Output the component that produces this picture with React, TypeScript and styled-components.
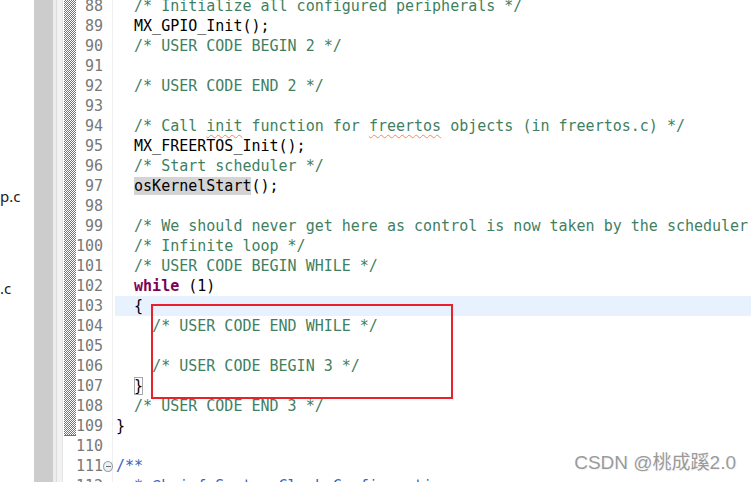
import React from "react";
import styled, { createGlobalStyle, css } from "styled-components";

const Global = createGlobalStyle`
  html, body { margin: 0; padding: 0; background: #fff; }
  body { width: 751px; height: 482px; overflow: hidden; }
`;

const Page = styled.div`
  display: flex;
  width: 751px;
  height: 482px;
  overflow: hidden;
  position: relative;
  background: #fff;
`;

const Explorer = styled.div`
  width: 34px;
  flex: none;
  display: flex;
  flex-direction: column;
  overflow: hidden;
  background: #fff;
`;

const TreeRow = styled.div`
  height: 23px;
  flex: none;
  display: flex;
  align-items: center;
  font-family: "Noto Sans", "Open Sans", sans-serif;
  font-size: 15px;
  color: #1a1a1a;
  white-space: nowrap;
`;

const Sash = styled.div`
  width: 19px;
  flex: none;
  background: #cccccc;
`;

const EditorEdge = styled.div`
  width: 11px;
  flex: none;
  background: linear-gradient(
    to right,
    #ececec 0 3px,
    #dcdcdc 3px 4px,
    #f2f2f2 4px 9px,
    #e4e4e4 9px 10px,
    #ffffff 10px 11px
  );
`;

const Editor = styled.div`
  flex: 1;
  position: relative;
  overflow: hidden;
`;

const Lines = styled.div`
  display: flex;
  flex-direction: column;
  margin-top: -4px;
`;

const Line = styled.div`
  display: grid;
  grid-template-columns: 12px 27px 12px 1fr;
  height: 20px;
  font-family: "DejaVu Sans Mono", "Liberation Mono", monospace;
  font-size: 15px;
  line-height: 20px;
`;

const Quick = styled.div<{ $changed: boolean; $last: boolean }>`
  ${(p) =>
    p.$changed &&
    css`
      background: repeating-conic-gradient(#2f86e0 0 25%, #ffffff 0 50%) 0 0 / 2px 2px;
    `}
  ${(p) =>
    p.$last &&
    css`
      box-shadow: inset 0 -1px 0 #2a7fdc;
    `}
`;

const Num = styled.div`
  text-align: right;
  color: #787878;
  white-space: nowrap;
`;

const Fold = styled.div`
  display: flex;
  align-items: center;
  justify-content: center;
  background: linear-gradient(to right, transparent 0 9px, #f0f0f0 9px 10px, transparent 10px);
`;

const FoldIcon = styled.span`
  width: 9px;
  height: 9px;
  border: 1px solid #9aa0a8;
  border-radius: 50%;
  background: #eef0f3;
  display: flex;
  align-items: center;
  justify-content: center;
  margin-right: 2px;
  &::after {
    content: "";
    width: 5px;
    height: 1px;
    background: #6b7280;
  }
`;

const Code = styled.div<{ $current?: boolean }>`
  padding-left: 1px;
  white-space: pre;
  color: #000;
  background: ${(p) => (p.$current ? "#e8f2fe" : "transparent")};
`;

const Comment = styled.span`
  color: #3f7f5f;
`;

const Doc = styled.span`
  color: #3f5fbf;
`;

const Keyword = styled.span`
  color: #7f0055;
  font-weight: bold;
`;

const Misspelled = styled.span`
  text-decoration: underline wavy #f08a5d;
  text-decoration-thickness: 1px;
  text-underline-offset: 3px;
`;

const Occurrence = styled.span`
  background: #d4d4d4;
`;

const Bracket = styled.span`
  outline: 1px solid #a8a8a8;
  outline-offset: -1px;
`;

const Highlight = styled.div`
  position: absolute;
  left: 87px;
  top: 304px;
  width: 298px;
  height: 91px;
  border: 2px solid #e8212a;
  pointer-events: none;
`;

const Watermark = styled.div`
  position: absolute;
  right: 15px;
  bottom: 8px;
  font-family: "Liberation Sans", "Noto Sans CJK SC", sans-serif;
  font-size: 19px;
  color: #9a9a9a;
  text-shadow: 0 0 1px #ffffff, 1px 1px 0 #f2f2f2;
  white-space: nowrap;
`;

type LineDef = { n: number; code: React.ReactNode; current?: boolean; fold?: boolean };

const lines: LineDef[] = [
  { n: 88, code: <>  <Comment>/* Initialize all configured peripherals */</Comment></> },
  { n: 89, code: <>  MX_GPIO_Init();</> },
  { n: 90, code: <>  <Comment>/* USER CODE BEGIN 2 */</Comment></> },
  { n: 91, code: "" },
  { n: 92, code: <>  <Comment>/* USER CODE END 2 */</Comment></> },
  { n: 93, code: "" },
  {
    n: 94,
    code: (
      <>
        {"  "}
        <Comment>
          /* Call <Misspelled>init</Misspelled> function for <Misspelled>freertos</Misspelled> objects (in freertos.c) */
        </Comment>
      </>
    ),
  },
  { n: 95, code: <>  MX_FREERTOS_Init();</> },
  { n: 96, code: <>  <Comment>/* Start scheduler */</Comment></> },
  { n: 97, code: <>  <Occurrence>osKernelStart</Occurrence>();</> },
  { n: 98, code: "" },
  { n: 99, code: <>  <Comment>/* We should never get here as control is now taken by the scheduler */</Comment></> },
  { n: 100, code: <>  <Comment>/* Infinite loop */</Comment></> },
  { n: 101, code: <>  <Comment>/* USER CODE BEGIN WHILE */</Comment></> },
  { n: 102, code: <>  <Keyword>while</Keyword> (1)</> },
  { n: 103, code: <>  {"{"}</>, current: true },
  { n: 104, code: <>    <Comment>/* USER CODE END WHILE */</Comment></> },
  { n: 105, code: "" },
  { n: 106, code: <>    <Comment>/* USER CODE BEGIN 3 */</Comment></> },
  { n: 107, code: <>  <Bracket>{"}"}</Bracket></> },
  { n: 108, code: <>  <Comment>/* USER CODE END 3 */</Comment></> },
  { n: 109, code: <>{"}"}</> },
  { n: 110, code: "" },
  { n: 111, code: <Doc>/**</Doc>, fold: true },
  { n: 112, code: <>  <Doc>* @brief System Clock Configuration</Doc></> },
];

const tree = ["", "", "", "", "", "", "", "", "p.c", "", "", "", ".c"];

export default function App() {
  return (
    <>
      <Global />
      <Page>
        <Explorer>
          {tree.map((t, i) => (
            <TreeRow key={i}>{t}</TreeRow>
          ))}
        </Explorer>
        <Sash />
        <EditorEdge />
        <Editor>
          <Lines>
            {lines.map((l) => (
              <Line key={l.n}>
                <Quick $changed={l.n <= 109} $last={l.n === 109} />
                <Num>{l.n}</Num>
                <Fold>{l.fold ? <FoldIcon /> : null}</Fold>
                <Code $current={l.current}>{l.code}</Code>
              </Line>
            ))}
          </Lines>
          <Highlight />
        </Editor>
        <Watermark>CSDN @桃成蹊2.0</Watermark>
      </Page>
    </>
  );
}
